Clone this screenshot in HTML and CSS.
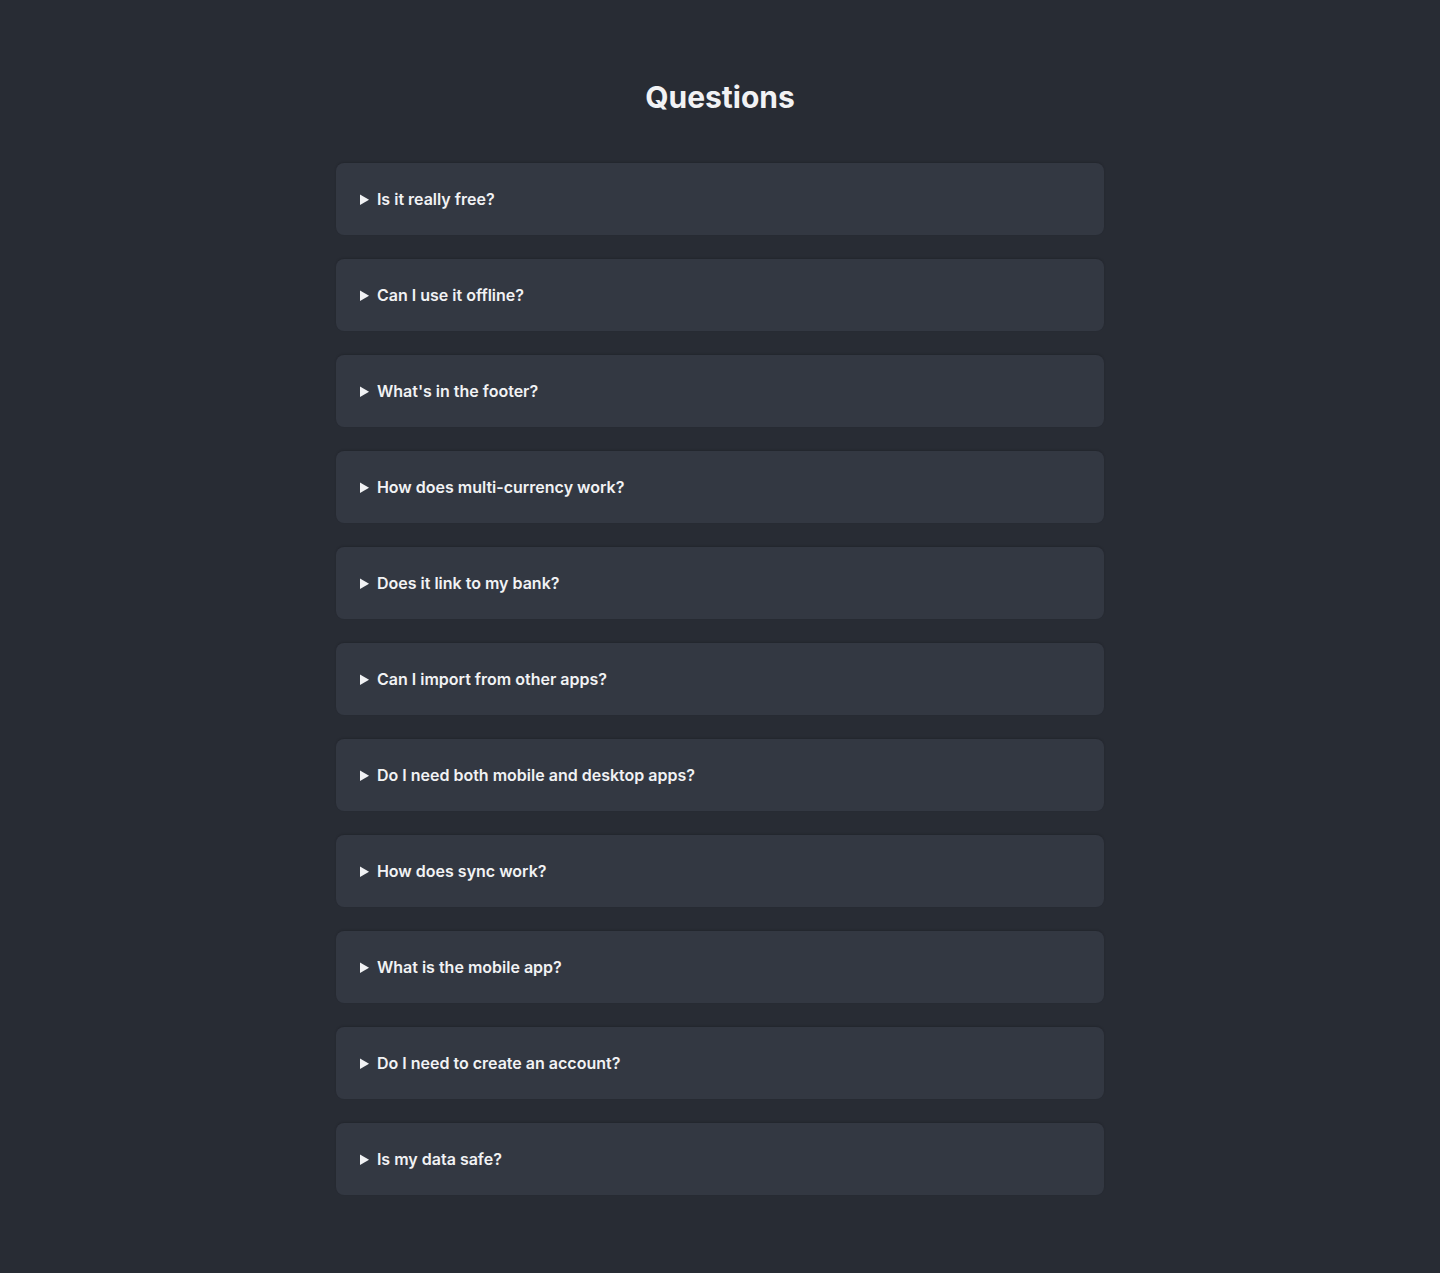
FILE: index.html
```html
<!DOCTYPE html>
<html lang="en">
<head>
  <meta charset="UTF-8">
  <title>Questions</title>
  <link rel="stylesheet" href="styles.css">
</head>
<body>

  <main class="faq">
    <h1>Questions</h1>

    <div class="faq-list">
      <details class="faq-item"><summary>Is it really free?</summary><p>Yes.</p></details>
      <details class="faq-item"><summary>Can I use it offline?</summary><p>Yes.</p></details>
      <details class="faq-item"><summary>What's in the footer?</summary><p>Links.</p></details>
      <details class="faq-item"><summary>How does multi-currency work?</summary><p>Each account has a currency.</p></details>
      <details class="faq-item"><summary>Does it link to my bank?</summary><p>No.</p></details>
      <details class="faq-item"><summary>Can I import from other apps?</summary><p>Yes, via CSV.</p></details>
      <details class="faq-item"><summary>Do I need both mobile and desktop apps?</summary><p>No.</p></details>
      <details class="faq-item"><summary>How does sync work?</summary><p>Automatically.</p></details>
      <details class="faq-item"><summary>What is the mobile app?</summary><p>A companion app.</p></details>
      <details class="faq-item"><summary>Do I need to create an account?</summary><p>No.</p></details>
      <details class="faq-item"><summary>Is my data safe?</summary><p>Yes.</p></details>
    </div>
  </main>

</body>
</html>
```

FILE: styles.css
```css
body {
  margin: 0;
  font-family: Inter, "Noto Sans", sans-serif;
  background-color: #282c34;
  color: #f1f2f4;
}

.faq {
  max-width: 768px;
  margin: 0 auto;
  padding: 78px 0 78px;
}

.faq h1 {
  margin: 0 0 47px;
  font-size: 30px;
  line-height: 38px;
  font-weight: 700;
  text-align: center;
}

.faq-list {
  display: flex;
  flex-direction: column;
  gap: 24px;
}

.faq-item {
  background-color: #333842;
  border-radius: 8px;
  box-shadow: 0 -1px 2px rgba(0, 0, 0, 0.15);
}

.faq-item summary {
  padding: 24px;
  font-size: 16px;
  line-height: 24px;
  font-weight: 600;
  cursor: pointer;
}

.faq-item p {
  margin: 0;
  padding: 0 24px 24px;
  color: #b8bcc4;
}
```
